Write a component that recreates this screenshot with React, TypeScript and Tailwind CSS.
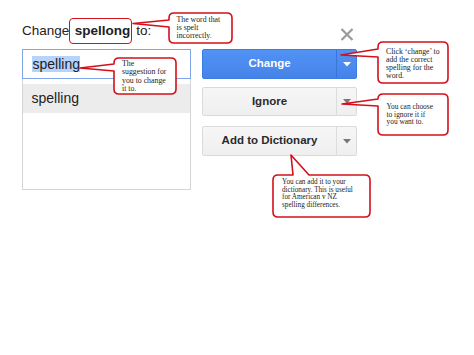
import React from "react";

const Arrow = ({ color }: { color: string }) => (
  <svg width="8" height="5" viewBox="0 0 8 5">
    <polygon points="0,0 8,0 4,4.5" fill={color} />
  </svg>
);

const callouts: { left: number; top: number; lh: number; size: number; lines: string[] }[] = [
  { left: 176.5, top: 16, lh: 8, size: 7.8, lines: ["The word that", "is spelt", "incorrectly."] },
  { left: 122, top: 60, lh: 8.3, size: 7.8, lines: ["The", "suggestion for", "you to change", "it to."] },
  { left: 386, top: 48, lh: 8, size: 7.8, lines: ["Click \u2018change\u2019 to", "add the correct", "spelling for the", "word."] },
  { left: 386.5, top: 103, lh: 7.6, size: 7.4, lines: ["You can choose", "to ignore it if", "you want to."] },
  { left: 282, top: 179, lh: 7.6, size: 7.2, lines: ["You can add it to your", "dictionary. This is useful", "for American v NZ", "spelling differences."] },
];

export default function App() {
  return (
    <div className="relative w-[474px] h-[355px] bg-white overflow-hidden font-['Liberation_Sans',Arial,sans-serif] text-[#222]">
      <div className="pl-[22px] pt-[18px]">
        {/* Title row */}
        <div className="w-[335px] h-[26px] flex items-center justify-between">
          <div className="flex items-center text-[13.5px] leading-[16px] text-[#222]">
            <span>Change</span>
            <span className="h-[26px] flex items-center pl-[4.5px] pr-[1px] border-[1.5px] border-[#d3101b] rounded-[4px] font-bold">
              spellong
            </span>
            <span className="ml-[4px]">to:</span>
          </div>
          <svg width="14" height="13" viewBox="0 0 14 13" className="mr-[3px] mt-[6px]">
            <path d="M1.5 1 L12.5 12 M12.5 1 L1.5 12" stroke="#9a9a9a" strokeWidth="2.2" />
          </svg>
        </div>

        {/* Main row */}
        <div className="flex mt-[5px]">
          <div className="w-[169px] h-[141px] flex flex-col">
            <div className="h-[30px] border border-[#7fa6ea] flex items-center pl-[9px] text-[14px]">
              <span className="bg-[#b5d3fb] leading-[16px] px-[0.5px]">spelling</span>
            </div>
            <div className="flex-1 border-x-[1.5px] border-b-[1.5px] border-[#d5d5d5] pt-[5px]">
              <div className="h-[29px] bg-[#ececec] flex items-center pl-[8.5px] text-[14px]">spelling</div>
            </div>
          </div>

          <div className="ml-[11px] flex flex-col">
            <div className="w-[155px] h-[30px] flex rounded-[2px] border border-[#3a7be4] bg-linear-to-b from-[#5192f4] to-[#4683e9] text-white font-bold text-[11.5px]">
              <div className="flex-1 flex items-center justify-center">Change</div>
              <div className="w-[20px] border-l border-[#3775dc] flex items-center justify-center">
                <Arrow color="#ffffff" />
              </div>
            </div>
            <div className="mt-[8px] w-[155px] h-[29px] flex rounded-[2px] border border-[#dadada] bg-linear-to-b from-[#f6f6f6] to-[#efefef] text-[#2a2a2a] font-bold text-[11.5px]">
              <div className="flex-1 flex items-center justify-center">Ignore</div>
              <div className="w-[20px] border-l border-[#dcdcdc] flex items-center justify-center">
                <Arrow color="#777777" />
              </div>
            </div>
            <div className="mt-[10px] w-[155px] h-[30px] flex rounded-[2px] border border-[#dadada] bg-linear-to-b from-[#f6f6f6] to-[#efefef] text-[#2a2a2a] font-bold text-[11.5px]">
              <div className="flex-1 flex items-center justify-center">Add to Dictionary</div>
              <div className="w-[20px] border-l border-[#dcdcdc] flex items-center justify-center">
                <Arrow color="#777777" />
              </div>
            </div>
          </div>
        </div>
      </div>

      {/* Annotation callouts */}
      <svg className="absolute left-0 top-0 pointer-events-none" width="474" height="355" viewBox="0 0 474 355">
        <g fill="#ffffff" stroke="#d3101b" strokeWidth="1.6" strokeLinejoin="round">
          <path d="M174 13 H227 Q232 13 232 18 V38 Q232 43 227 43 H174 Q169 43 169 38 V27 L133 23.5 L169 20 V18 Q169 13 174 13 Z" />
          <path d="M119 58 H171 Q176 58 176 63 V89 Q176 94 171 94 H119 Q114 94 114 89 V71 L80 68 L114 64 V63 Q114 58 119 58 Z" />
          <path d="M383 42 H443 Q448 42 448 47 V78 Q448 83 443 83 H383 Q378 83 378 78 V57 L341 55 L378 49 V47 Q378 42 383 42 Z" />
          <path d="M383 94 H443 Q448 94 448 99 V130 Q448 135 443 135 H383 Q378 135 378 130 V106 L342 104 L378 99 Q378 94 383 94 Z" />
          <path d="M278 175 H293 L291 155 L309 175 H365 Q370 175 370 180 V212 Q370 217 365 217 H278 Q273 217 273 212 V180 Q273 175 278 175 Z" />
        </g>
      </svg>
      {callouts.map((c, i) => (
        <div
          key={i}
          className="absolute font-['Liberation_Serif',Georgia,serif] text-[#222] whitespace-nowrap"
          style={{ left: c.left, top: c.top, fontSize: c.size, lineHeight: `${c.lh}px` }}
        >
          {c.lines.map((l, j) => (
            <div key={j}>{l}</div>
          ))}
        </div>
      ))}
    </div>
  );
}
